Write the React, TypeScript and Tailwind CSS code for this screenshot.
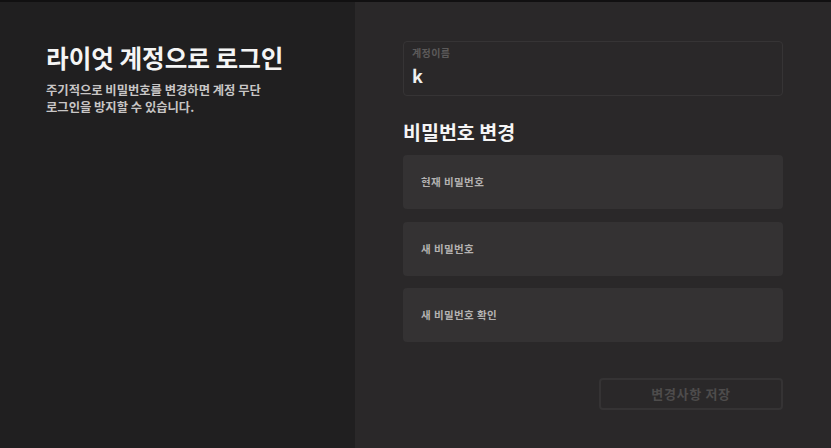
import React, { useState } from 'react';

const font = { fontFamily: '"Noto Sans CJK KR", "Noto Sans", sans-serif' };

const PasswordField = ({ label }: { label: string }) => (
  <div className="h-[54px] rounded bg-[#343233] px-[18px] flex items-center">
    <span className="text-[10.5px] font-bold text-[#b4b2b2] tracking-[0.04em]">{label}</span>
  </div>
);

const App = () => {
  const [username] = useState('k');

  return (
    <div className="w-[831px] h-[448px] flex flex-col bg-[#111011] overflow-hidden" style={font}>
      <div className="h-[2px] shrink-0" />
      <div className="flex flex-1">
        <div className="w-[355px] shrink-0 bg-[#201f20] pl-[46px] pt-[38px]">
          <h1 className="text-[24.6px] leading-[34px] font-bold text-[#f5f5f5]">라이엇 계정으로 로그인</h1>
          <p className="mt-[8px] w-[235px] break-keep text-[12.3px] leading-[17px] font-semibold text-[#c8c6c6]">
            주기적으로 비밀번호를 변경하면 계정 무단 로그인을 방지할 수 있습니다.
          </p>
        </div>

        <div className="flex-1 bg-[#2a2829] pl-[48px] pr-[48px] pt-[39px]">
          <div className="h-[55px] rounded border border-[#363435] px-[8px] pt-[3px]">
            <div className="text-[10px] font-bold text-[#5c5a5a] tracking-[0.04em]">계정이름</div>
            <div className="mt-[4px] text-[18px] leading-[22px] font-bold text-[#f0f0f0]">{username}</div>
          </div>

          <h2 className="mt-[23px] text-[19.5px] leading-[26px] font-bold text-[#f5f5f5]">비밀번호 변경</h2>

          <div className="mt-[10px] flex flex-col gap-[12.5px]">
            <PasswordField label="현재 비밀번호" />
            <PasswordField label="새 비밀번호" />
            <PasswordField label="새 비밀번호 확인" />
          </div>

          <div className="mt-[36px] flex justify-end">
            <button
              type="button"
              disabled
              className="w-[184px] h-[32px] rounded border-2 border-[#353334] text-[13px] font-bold text-[#4e4c4c] tracking-[0.05em]"
            >
              변경사항 저장
            </button>
          </div>
        </div>
      </div>
    </div>
  );
};

export default App;
